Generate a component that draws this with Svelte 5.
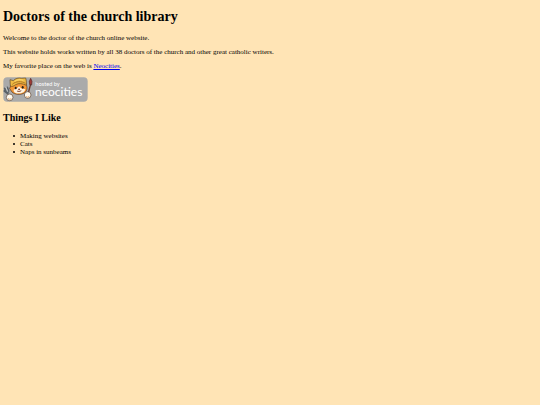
<script lang="ts">
  const likes = ["Making websites", "Cats", "Naps in sunbeams"];
</script>

<svelte:head>
  <title>Doctors of the church library</title>
</svelte:head>

<main>
  <h1>Doctors of the church library</h1>

  <p>Welcome to the doctor of the church online website.</p>

  <p>This website holds works written by all 38 doctors of the church and other great catholic writers.</p>

  <p>My favorite place on the web is <a href="#neocities">Neocities</a>.</p>

  <a class="badge" href="#neocities" aria-label="Hosted by Neocities">
    <svg viewBox="0 0 255 75" aria-hidden="true">
      <rect x="1" y="1" width="253" height="73" rx="12" fill="#aaa" />

      <!-- fork and brush -->
      <g fill="none" stroke-linecap="round" stroke-linejoin="round">
        <path d="M5 34 L10 46 L21 58 M13 31 L17 42 L14 48 M4 42 L12 48" stroke="#5b6268" stroke-width="5" />
        <path d="M9 31 L14 43" stroke="#d8dcdd" stroke-width="2" />
        <path d="M75 51 L83 21" stroke="#6b3b2e" stroke-width="4" />
        <path d="M80 22 L79 13 L83 4 L87 13 L86 23 Z" fill="#a13a33" stroke="#54292a" stroke-width="2" />
      </g>

      <!-- face -->
      <path d="M23 26 L20 35 L27 45 C34 53 55 55 65 47 C71 43 74 35 71 26 L68 16 L30 18 Z" fill="#f49835" stroke="#553421" stroke-width="2" />
      <path d="M32 38 L42 34 L48 28 L54 34 L67 37 C65 46 57 50 48 49 C38 50 31 46 32 38 Z" fill="#fff2df" />
      <ellipse cx="38" cy="33" rx="3" ry="4" fill="#251e1d" />
      <ellipse cx="59" cy="31" rx="3" ry="4" fill="#251e1d" />
      <path d="M46 36 L51 36 L48 39 Z M42 42 Q48 46 55 41" fill="#ae5340" stroke="#6c392b" stroke-width="2" />

      <!-- cap with ears -->
      <path d="M22 27 L21 8 L31 11 C37 4 46 2 56 4 L68 3 L70 12 L70 25 C59 19 47 18 38 23 C32 27 28 30 22 27 Z" fill="#efba43" stroke="#654820" stroke-width="2" stroke-linejoin="round" />
      <path d="M28 22 C38 12 56 12 67 19" fill="none" stroke="#af7624" stroke-width="3" />
      <path d="M35 13 C43 7 53 7 61 10" fill="none" stroke="#ffdc71" stroke-width="3" />

      <!-- paws -->
      <g fill="#fffaf0" stroke="#5b4332" stroke-width="2">
        <circle cx="20" cy="61" r="10" />
        <circle cx="74" cy="54" r="10" />
      </g>
      <path d="M15 65 Q20 69 25 65 M69 59 Q74 63 79 58" fill="none" stroke="#e7a565" stroke-width="3" />

      <text class="hosted" x="97" y="27">hosted by</text>
      <text class="brand" x="96" y="58">neocities</text>
    </svg>
  </a>

  <h2>Things I Like</h2>

  <ul>
    {#each likes as like}
      <li>{like}</li>
    {/each}
  </ul>
</main>

<style>
  :global(body) {
    background: #ffe4b5;
  }

  main {
    padding: 9px 3px;
    color: #000;
    font-family: "Liberation Serif", "Times New Roman", serif;
    font-size: 7px;
    line-height: 8px;
  }

  h1 {
    margin: 0 0 9px;
    font-size: 14px;
    line-height: 16px;
  }

  p {
    margin: 0 0 6px;
  }

  a {
    color: #00e;
  }

  .badge {
    display: block;
    width: 85px;
    margin-top: 7px;
  }

  .badge svg {
    display: block;
    width: 100%;
  }

  .hosted,
  .brand {
    fill: #fff;
    font-family: Lato, "Noto Sans", sans-serif;
  }

  .hosted {
    font-size: 17px;
  }

  .brand {
    font-size: 36px;
  }

  h2 {
    margin: 10px 0 8px;
    font-size: 10px;
    line-height: 12px;
  }

  ul {
    margin: 0;
    padding: 0 0 0 10px;
    list-style: none;
  }

  li {
    display: flex;
    align-items: center;
    gap: 5px;
  }

  li::before {
    content: "";
    width: 2px;
    height: 2px;
    border-radius: 50%;
    background: #000;
  }
</style>
